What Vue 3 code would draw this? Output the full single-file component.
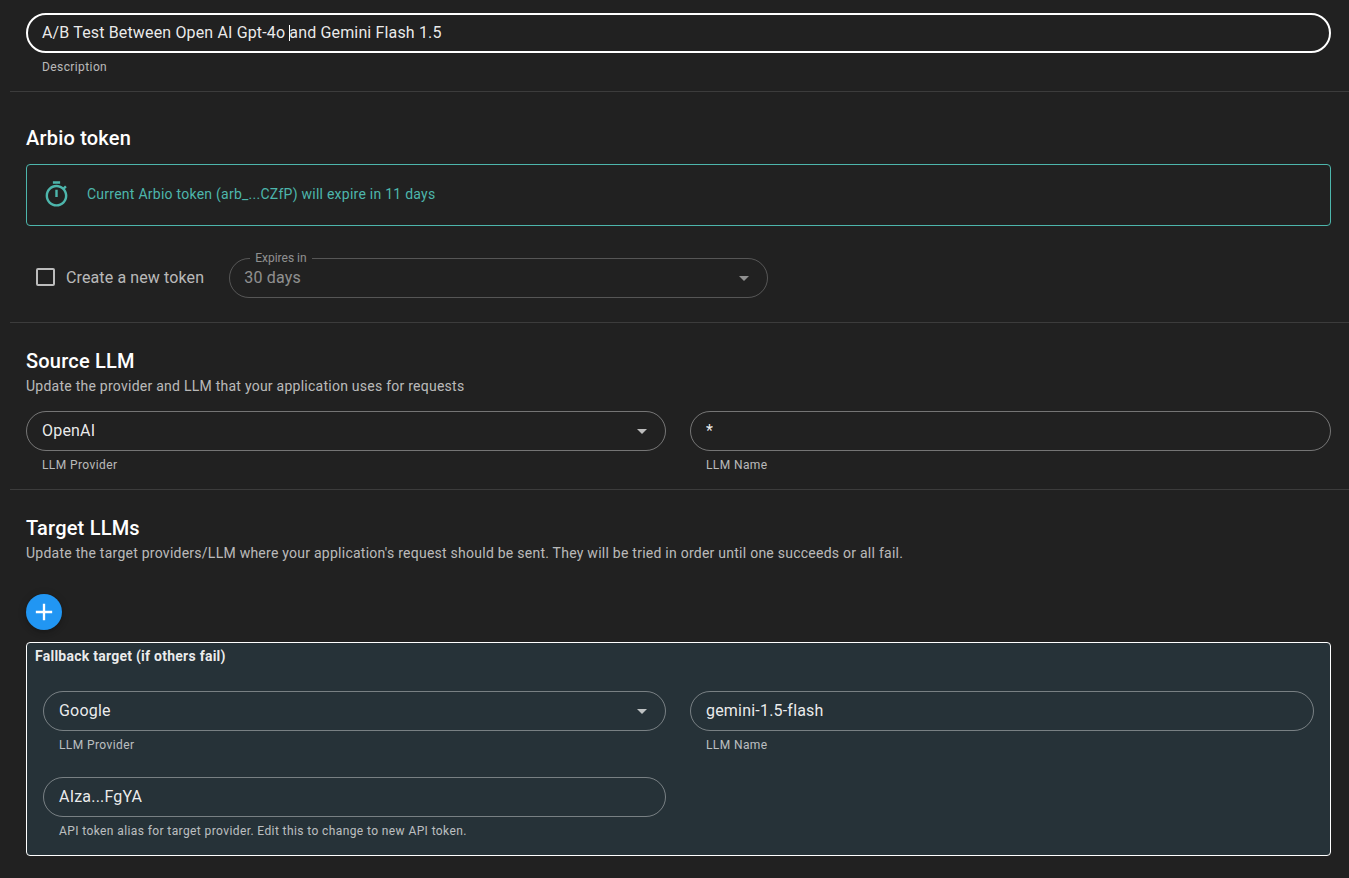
<script setup>
const sourceFields = [
  { label: "LLM Provider", value: "OpenAI", select: true },
  { label: "LLM Name", value: "*" }
];
const targetFields = [
  { label: "LLM Provider", value: "Google", select: true },
  { label: "LLM Name", value: "gemini-1.5-flash" },
  { label: "API token alias for target provider. Edit this to change to new API token.", value: "AIza...FgYA" }
];
</script>

<template>
  <main class="page">
    <section class="description">
      <div class="field focused">
        <span class="value">A/B Test Between Open AI Gpt-4o <i class="caret"></i>and Gemini Flash 1.5</span>
      </div>
      <p class="helper">Description</p>
    </section>

    <section class="section token-section">
      <h2>Arbio token</h2>
      <div class="alert">
        <svg class="alert-icon" viewBox="0 0 24 24" aria-hidden="true">
          <path fill="currentColor" d="M15 1H9v2h6V1zm-4 13h2V8h-2v6zm8.03-6.61 1.42-1.42c-.43-.51-.9-.99-1.41-1.41l-1.42 1.42C16.07 4.74 14.12 4 12 4c-4.97 0-9 4.03-9 9s4.02 9 9 9 9-4.03 9-9c0-2.12-.74-4.07-1.97-5.61zM12 20c-3.87 0-7-3.13-7-7s3.13-7 7-7 7 3.13 7 7-3.13 7-7 7z" />
        </svg>
        <span>Current Arbio token (arb_...CZfP) will expire in 11 days</span>
      </div>
      <div class="token-row">
        <label class="check">
          <span class="box"></span>
          <span>Create a new token</span>
        </label>
        <div class="field outlined disabled">
          <span class="legend">Expires in</span>
          <span class="value">30 days</span>
          <span class="arrow"></span>
        </div>
      </div>
    </section>

    <section class="section source-section">
      <h2>Source LLM</h2>
      <p class="subtitle">Update the provider and LLM that your application uses for requests</p>
      <div class="grid">
        <div v-for="item in sourceFields" :key="item.label">
          <div class="field">
            <span class="value">{{ item.value }}</span>
            <span v-if="item.select" class="arrow"></span>
          </div>
          <p class="helper">{{ item.label }}</p>
        </div>
      </div>
    </section>

    <section class="section target-section">
      <h2>Target LLMs</h2>
      <p class="subtitle">Update the target providers/LLM where your application's request should be sent. They will be tried in order until one succeeds or all fail.</p>
      <button class="add" type="button" aria-label="Add target">
        <svg viewBox="0 0 24 24" aria-hidden="true"><path fill="currentColor" d="M19 13h-6v6h-2v-6H5v-2h6V5h2v6h6v2z" /></svg>
      </button>
      <div class="fallback">
        <h3>Fallback target (if others fail)</h3>
        <div class="grid">
          <div v-for="item in targetFields" :key="item.label">
            <div class="field">
              <span class="value">{{ item.value }}</span>
              <span v-if="item.select" class="arrow"></span>
            </div>
            <p class="helper">{{ item.label }}</p>
          </div>
        </div>
      </div>
    </section>
  </main>
</template>

<style scoped>
.page {
  box-sizing: border-box;
  height: 878px;
  overflow: hidden;
  padding: 13px 0 0 10px;
  background: #212121;
  color: #fff;
  font-family: Roboto, "Liberation Sans", sans-serif;
}

.description,
.section {
  box-sizing: border-box;
  padding: 0 18px 0 16px;
  border-bottom: 1px solid rgba(255, 255, 255, 0.12);
}

.description {
  height: 79px;
}

.section h2 {
  margin: 0;
  font-size: 20px;
  font-weight: 500;
  line-height: 28px;
  letter-spacing: 0.2px;
}

.token-section {
  height: 231px;
  padding-top: 32px;
}

.source-section {
  height: 167px;
  padding-top: 24px;
}

.target-section {
  padding-top: 24px;
  border-bottom: 0;
}

.subtitle {
  margin: 1px 0 15px;
  color: rgba(255, 255, 255, 0.7);
  font-size: 14px;
  line-height: 20px;
  letter-spacing: 0.25px;
}

.field {
  position: relative;
  box-sizing: border-box;
  display: flex;
  align-items: center;
  height: 40px;
  padding: 0 15px 2px;
  border: 1px solid rgba(255, 255, 255, 0.38);
  border-radius: 20px;
  font-size: 16px;
}

.field.focused {
  padding: 0 14px 2px;
  border: 2px solid #fff;
}

.value {
  color: rgba(255, 255, 255, 0.92);
  letter-spacing: 0.2px;
  white-space: nowrap;
}

.focused .value {
  letter-spacing: 0.15px;
}

.caret {
  display: inline-block;
  width: 1px;
  height: 16px;
  margin-right: -1px;
  background: #fff;
  vertical-align: -3px;
}

.arrow {
  position: absolute;
  top: 50%;
  right: 18px;
  width: 0;
  height: 0;
  margin-top: -2px;
  border-top: 5px solid rgba(255, 255, 255, 0.7);
  border-right: 5px solid transparent;
  border-left: 5px solid transparent;
}

.helper {
  margin: 5px 0 0;
  padding-left: 16px;
  color: rgba(255, 255, 255, 0.7);
  font-size: 12px;
  line-height: 18px;
  letter-spacing: 0.0333em;
}

.alert {
  box-sizing: border-box;
  display: flex;
  align-items: center;
  gap: 16px;
  height: 62px;
  margin-top: 12px;
  padding: 0 15px 2px;
  border: 1px solid #4db6ac;
  border-radius: 4px;
  color: #4db6ac;
  font-size: 14px;
  letter-spacing: 0.0179em;
}

.alert-icon {
  flex: 0 0 29px;
  width: 29px;
  height: 29px;
}

.token-row {
  display: flex;
  align-items: center;
  gap: 25px;
  margin-top: 32px;
}

.check {
  display: flex;
  align-items: center;
  gap: 11px;
  margin-left: 10px;
  padding-bottom: 2px;
  color: rgba(255, 255, 255, 0.7);
  font-size: 16px;
  letter-spacing: 0.12px;
}

.box {
  box-sizing: border-box;
  width: 19px;
  height: 18px;
  border: 2px solid rgba(255, 255, 255, 0.7);
  border-radius: 2px;
}

.disabled {
  width: 539px;
  padding-left: 14px;
  border-color: rgba(255, 255, 255, 0.24);
}

.disabled .value {
  color: rgba(255, 255, 255, 0.5);
}

.disabled .arrow {
  border-top-color: rgba(255, 255, 255, 0.5);
}

.legend {
  position: absolute;
  top: -8px;
  left: 20px;
  padding: 0 5px;
  background: #212121;
  color: rgba(255, 255, 255, 0.5);
  font-size: 12px;
  line-height: 14px;
}

.grid {
  display: grid;
  grid-template-columns: 640px 1fr;
  column-gap: 24px;
  row-gap: 23px;
}

.add {
  display: flex;
  align-items: center;
  justify-content: center;
  width: 36px;
  height: 36px;
  margin-top: 31px;
  padding: 0;
  border: 0;
  border-radius: 50%;
  background: #2196f3;
  color: #fff;
  box-shadow: 0 3px 5px -1px rgba(0, 0, 0, 0.2), 0 1px 10px rgba(0, 0, 0, 0.12);
}

.add svg {
  width: 28px;
  height: 28px;
}

.fallback {
  box-sizing: border-box;
  height: 214px;
  margin-top: 12px;
  padding: 4px 16px 0 8px;
  border: 1px solid #fff;
  border-radius: 4px;
  background: #263238;
}

.fallback h3 {
  margin: 0 0 26px;
  color: rgba(255, 255, 255, 0.92);
  font-size: 14px;
  font-weight: 700;
  line-height: 18px;
  letter-spacing: 0.25px;
}

.fallback .grid {
  grid-template-columns: 623px 1fr;
  margin-left: 8px;
}

.fallback .field {
  border-color: rgba(255, 255, 255, 0.38);
}
</style>

<style>
html,
body {
  margin: 0;
  background: #212121;
}
</style>
